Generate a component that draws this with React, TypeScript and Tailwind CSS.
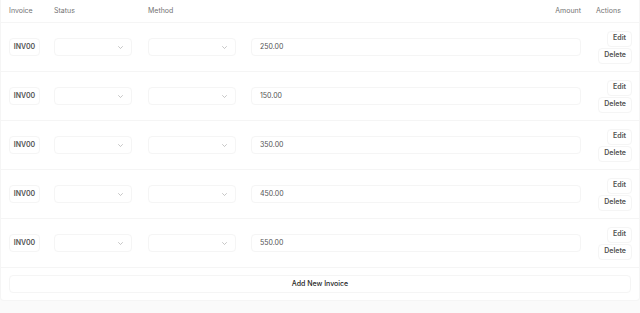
const invoices = [
  { id: 'INV00', amount: '250.00' },
  { id: 'INV00', amount: '150.00' },
  { id: 'INV00', amount: '350.00' },
  { id: 'INV00', amount: '450.00' },
  { id: 'INV00', amount: '550.00' },
];

function Chevron() {
  return (
    <svg width="5" height="3" viewBox="0 0 10 6" fill="none" className="text-neutral-400">
      <path d="M1 1l4 4 4-4" stroke="currentColor" strokeWidth="1.2" strokeLinecap="round" strokeLinejoin="round" />
    </svg>
  );
}

function SelectBox({ width }: { width: string }) {
  return (
    <div className={`${width} h-[18px] flex items-center justify-end pr-2 rounded border border-neutral-100 bg-white`}>
      <Chevron />
    </div>
  );
}

export default function App() {
  return (
    <div className="w-[640px] h-[313px] bg-neutral-50 font-['Inter',sans-serif] text-[7px] text-neutral-700">
      <div className="bg-white border border-neutral-100 border-t-0 rounded-b">
        {/* Header */}
        <div className="grid grid-cols-[45px_94px_104px_345px_1fr] h-[23px] items-center border-b border-neutral-100 text-neutral-500">
          <div className="pl-2">Invoice</div>
          <div className="pl-2">Status</div>
          <div className="pl-2">Method</div>
          <div className="pr-2 text-right">Amount</div>
          <div className="pl-[7px]">Actions</div>
        </div>

        {invoices.map((inv, i) => (
          <div
            key={i}
            className="grid grid-cols-[45px_94px_104px_345px_1fr] h-[49px] items-center border-b border-neutral-100"
          >
            <div className="pl-2">
              <div className="w-[31px] h-[18px] flex items-center justify-center rounded border border-neutral-100 font-semibold text-neutral-600">
                {inv.id}
              </div>
            </div>
            <div className="pl-2">
              <SelectBox width="w-[78px]" />
            </div>
            <div className="pl-2">
              <SelectBox width="w-[88px]" />
            </div>
            <div className="pl-[7px] pr-2">
              <div className="h-[18px] flex items-center pl-2 rounded border border-neutral-100 text-neutral-600">
                {inv.amount}
              </div>
            </div>
            <div className="flex flex-col items-end gap-[1px] pr-[7px]">
              <button className="h-4 px-[5px] rounded border border-neutral-100 font-semibold text-neutral-600 bg-white">Edit</button>
              <button className="h-4 px-[5px] rounded border border-neutral-100 font-semibold text-neutral-600 bg-white">Delete</button>
            </div>
          </div>
        ))}

        {/* Footer */}
        <div className="px-2 py-[7px]">
          <button className="w-full h-[18px] rounded border border-neutral-100 bg-white font-medium text-neutral-800">
            Add New Invoice
          </button>
        </div>
      </div>
    </div>
  );
}
